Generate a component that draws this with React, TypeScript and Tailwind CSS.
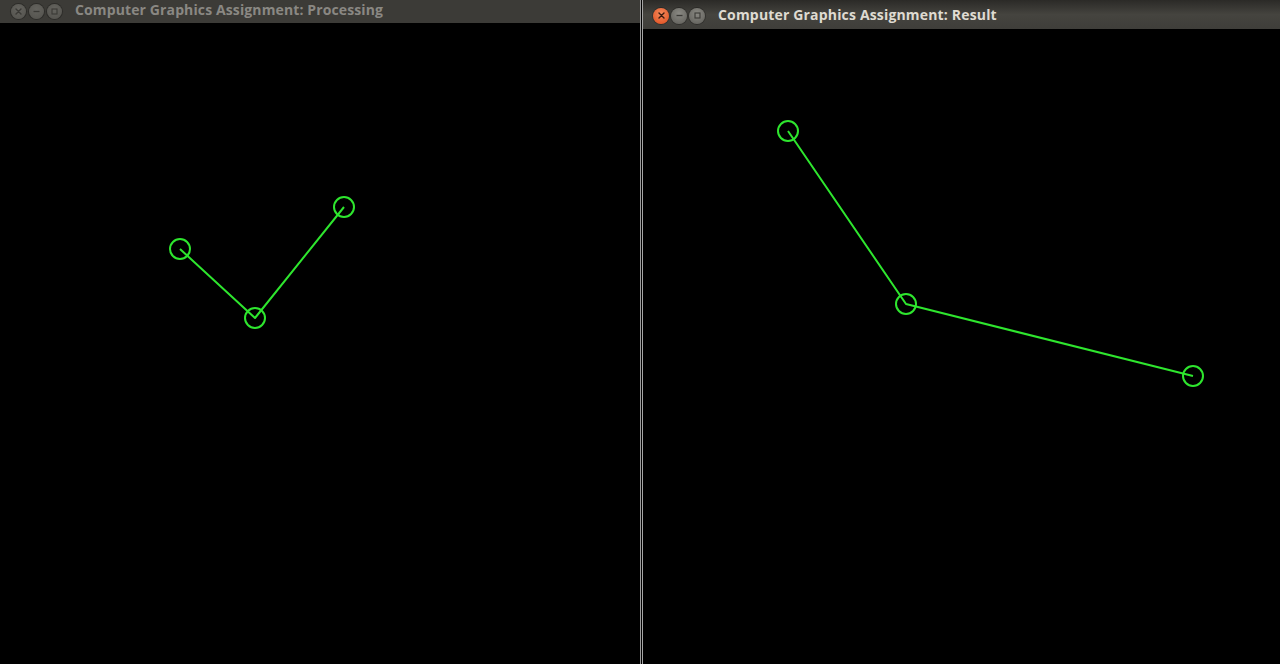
import React from "react";

const G = "#2ee62e";

function Btn({ kind, active }: { kind: "close" | "min" | "max"; active: boolean }) {
  const isClose = kind === "close";
  const bg = isClose && active
    ? "bg-[radial-gradient(circle_at_50%_35%,#f58a5c,#df4b1c)]"
    : active
    ? "bg-[radial-gradient(circle_at_50%_35%,#8a8983,#5d5c57)]"
    : "bg-[radial-gradient(circle_at_50%_35%,#64635e,#52514c)]";
  const stroke = active ? (isClose ? "#3a1a0e" : "#3b3a36") : "#3a3935";
  const size = active ? "w-[16px] h-[16px]" : "w-[15px] h-[15px]";
  return (
    <div className={`${size} rounded-full ${bg} flex items-center justify-center shadow-[0_0_0_1px_rgba(0,0,0,0.25)]`}>
      <svg width="9" height="9" viewBox="0 0 9 9">
        {kind === "close" && (
          <path d="M2 2 L7 7 M7 2 L2 7" stroke={stroke} strokeWidth="1.4" strokeLinecap="round" />
        )}
        {kind === "min" && <path d="M1.5 4.5 H7.5" stroke={stroke} strokeWidth="1.3" />}
        {kind === "max" && <rect x="2" y="2" width="5" height="5" fill="none" stroke={stroke} strokeWidth="1.1" />}
      </svg>
    </div>
  );
}

function Graph({ pts }: { pts: [number, number][] }) {
  return (
    <>
      <polyline
        points={pts.map((p) => p.join(",")).join(" ")}
        fill="none"
        stroke={G}
        strokeWidth="2"
        strokeLinejoin="round"
      />
      {pts.map((p, i) => (
        <circle key={i} cx={p[0]} cy={p[1]} r="10" fill="none" stroke={G} strokeWidth="2" />
      ))}
    </>
  );
}

export default function App() {
  return (
    <div
      className="w-[1280px] h-[664px] bg-black flex overflow-hidden"
      style={{ fontFamily: "'Open Sans', 'DejaVu Sans', sans-serif" }}
    >
      {/* Left window */}
      <div className="w-[640px] h-full flex flex-col">
        <div className="h-[23px] bg-[#3c3b37] flex items-center pl-[11px]">
          <div className="flex gap-[3px]">
            <Btn kind="close" active={false} />
            <Btn kind="min" active={false} />
            <Btn kind="max" active={false} />
          </div>
          <span className="ml-[13px] -mt-[3px] text-[14px] font-bold text-[#8a8883] leading-none tracking-[0.12px]">
            Computer Graphics Assignment: Processing
          </span>
        </div>
        <div className="flex-1 bg-black">
          <svg width="640" height="641" viewBox="0 23 640 641" className="block">
            <Graph pts={[[180, 249], [255, 318], [344, 207]]} />
          </svg>
        </div>
      </div>
      {/* separator */}
      <div className="w-px h-full bg-[#9a9a9a]" />
      <div className="w-px h-full bg-black" />
      {/* Right window */}
      <div className="flex-1 h-full flex flex-col border-l border-[#a4a4a4]">
        <div className="h-[29px] bg-gradient-to-b from-[#2b2a27] via-[#45443f] to-[#3f3e3a] flex items-center pl-[10px] pt-[2px]">
          <div className="flex gap-[2px]">
            <Btn kind="close" active />
            <Btn kind="min" active />
            <Btn kind="max" active />
          </div>
          <span className="ml-[13px] -mt-[2px] text-[14px] font-bold text-[#dfdbd2] leading-none tracking-[0.17px]">
            Computer Graphics Assignment: Result
          </span>
        </div>
        <div className="flex-1 bg-black">
          <svg width="637" height="635" viewBox="643 29 637 635" className="block">
            <Graph pts={[[788, 131], [906, 304], [1193, 376]]} />
          </svg>
        </div>
      </div>
    </div>
  );
}
